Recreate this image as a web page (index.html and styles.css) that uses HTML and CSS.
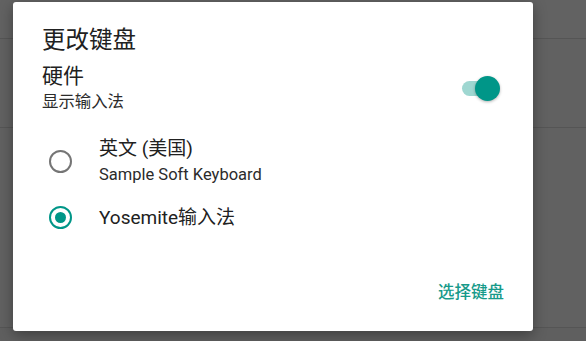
FILE: index.html
```html
<!DOCTYPE html>
<html lang="zh-CN">
<head>
<meta charset="utf-8">
<link rel="stylesheet" href="styles.css">
</head>
<body>
<div class="screen">
  <div class="bg-row bg-row-1"></div>
  <div class="bg-row bg-row-2"></div>
  <div class="bg-row bg-row-3"></div>

  <div class="dialog">
    <div class="title">更改键盘</div>
    <div class="hw-row">
      <div class="hw-text">
        <div class="hw-title">硬件</div>
        <div class="hw-sub">显示输入法</div>
      </div>
      <div class="switch">
        <div class="track"></div>
        <div class="thumb"></div>
      </div>
    </div>
    <div class="option option-1">
      <span class="radio"></span>
      <div class="opt-text">
        <div class="opt-title">英文 (美国)</div>
        <div class="opt-sub">Sample Soft Keyboard</div>
      </div>
    </div>
    <div class="option option-2">
      <span class="radio checked"></span>
      <div class="opt-text">
        <div class="opt-title">Yosemite输入法</div>
      </div>
    </div>
    <div class="actions">
      <span class="btn">选择键盘</span>
    </div>
  </div>
</div>
</body>
</html>
```

FILE: styles.css
```css
* { box-sizing: border-box; }
html, body {
  margin: 0;
  padding: 0;
}
body {
  width: 586px;
  height: 341px;
  overflow: hidden;
  background: #5f5f5f;
  font-family: Roboto, "Noto Sans CJK SC", sans-serif;
}
.screen {
  position: relative;
  width: 586px;
  height: 341px;
  display: flex;
  flex-direction: column;
}
.bg-row {
  border-bottom: 1px solid #555555;
  background: #616161;
}
.bg-row-1 { height: 39px; background: #626262; }
.bg-row-2 { height: 89px; }
.bg-row-3 { height: 200px; }

.dialog {
  position: absolute;
  left: 13px;
  top: 2px;
  width: 520px;
  height: 329px;
  background: #ffffff;
  border-radius: 3px;
  box-shadow: 0 4px 14px rgba(0,0,0,0.35);
  padding: 23px 29px 0 29px;
  display: flex;
  flex-direction: column;
  color: #212121;
}
.title {
  font-size: 23.5px;
  line-height: 30px;
  color: #212121;
}
.hw-row {
  margin-top: 9px;
  display: flex;
  align-items: center;
  justify-content: space-between;
}
.hw-title {
  font-size: 21px;
  line-height: 24px;
}
.hw-sub {
  margin-top: 4px;
  font-size: 16.4px;
  line-height: 20px;
  color: #2b2b2b;
}
.switch {
  position: relative;
  width: 42px;
  height: 26px;
  margin-right: 4px;
  margin-top: 2px;
}
.track {
  position: absolute;
  left: 4px;
  top: 5px;
  width: 34px;
  height: 15px;
  border-radius: 8px;
  background: #9fd7d1;
}
.thumb {
  position: absolute;
  right: 0;
  top: 0;
  width: 25px;
  height: 25px;
  border-radius: 50%;
  background: #009688;
  box-shadow: 0 1px 3px rgba(0,0,0,0.3);
}
.option {
  display: flex;
  align-items: center;
}
.option-1 { margin-top: 25px; }
.option-2 { margin-top: 21px; }
.radio {
  width: 23px;
  height: 23px;
  border-radius: 50%;
  border: 2px solid #757575;
  margin-left: 7px;
  margin-right: 27px;
  flex: none;
  display: flex;
  align-items: center;
  justify-content: center;
}
.radio.checked {
  border-color: #009688;
}
.radio.checked::after {
  content: "";
  width: 11px;
  height: 11px;
  border-radius: 50%;
  background: #009688;
}
.opt-title {
  font-size: 19px;
  line-height: 23px;
  color: #212121;
}
.opt-sub {
  margin-top: 5px;
  font-size: 16.5px;
  line-height: 20px;
  color: #2b2b2b;
}
.actions {
  margin-top: auto;
  margin-bottom: 28px;
  display: flex;
  justify-content: flex-end;
}
.btn {
  font-size: 16.5px;
  line-height: 20px;
  font-weight: 500;
  color: #179a8a;
}
```
